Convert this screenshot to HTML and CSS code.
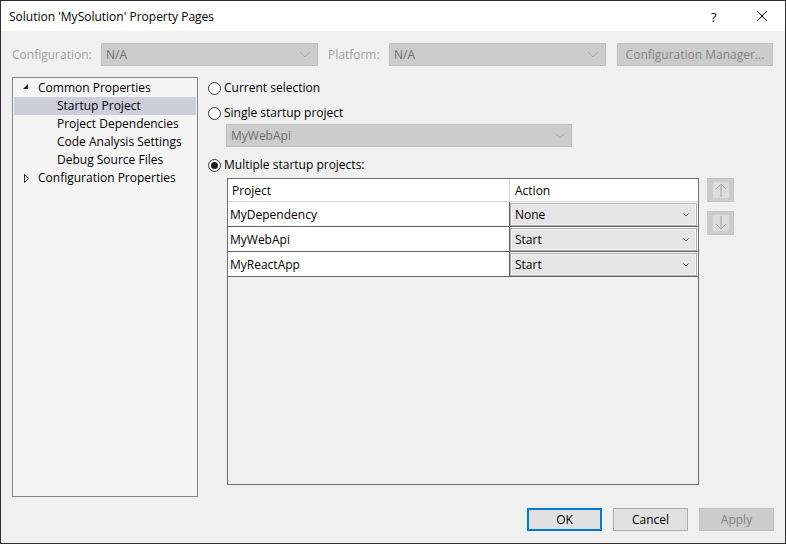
FILE: index.html
```html
<!DOCTYPE html>
<html>
<head>
<meta charset="utf-8">
<link rel="stylesheet" href="styles.css">
</head>
<body>
<div class="window">
  <div class="titlebar">
    <span class="title">Solution 'MySolution' Property Pages</span>
    <span class="help">?</span>
    <span class="close"><svg width="12" height="12" viewBox="0 0 12 12"><path d="M1 1 L11 11 M11 1 L1 11" stroke="#000" stroke-width="1" fill="none"/></svg></span>
  </div>
  <div class="body">
    <div class="configrow">
      <span class="lbl lbl-config">Configuration:</span>
      <div class="combo disabled combo-top"><span>N/A</span><svg class="chev-big" width="10" height="6" viewBox="0 0 10 6"><polyline points="0.5,0.5 5,5 9.5,0.5" fill="none" stroke="#a9a9a9" stroke-width="1"/></svg></div>
      <span class="lbl lbl-platform">Platform:</span>
      <div class="combo disabled combo-top"><span>N/A</span><svg class="chev-big" width="10" height="6" viewBox="0 0 10 6"><polyline points="0.5,0.5 5,5 9.5,0.5" fill="none" stroke="#a9a9a9" stroke-width="1"/></svg></div>
      <div class="btn btn-disabled cfgmgr">Configuration Manager...</div>
    </div>
    <div class="main">
      <div class="tree">
        <div class="node">
          <svg class="exp" width="9" height="9" viewBox="0 0 9 9"><polygon points="6,1 6,6 1,6" fill="#1e1e1e"/></svg>
          <span>Common Properties</span>
        </div>
        <div class="node child selected"><span>Startup Project</span></div>
        <div class="node child"><span>Project Dependencies</span></div>
        <div class="node child"><span>Code Analysis Settings</span></div>
        <div class="node child"><span>Debug Source Files</span></div>
        <div class="node">
          <svg class="exp" width="9" height="11" viewBox="0 0 9 11"><polygon points="2.5,1.5 6.5,5.5 2.5,9.5" fill="none" stroke="#1e1e1e" stroke-width="1"/></svg>
          <span>Configuration Properties</span>
        </div>
      </div>
      <div class="panel">
        <div class="radio-row r1"><span class="radio"></span><span>Current selection</span></div>
        <div class="radio-row r2"><span class="radio"></span><span>Single startup project</span></div>
        <div class="combo disabled combo-single"><span>MyWebApi</span><svg class="chev-big" width="10" height="6" viewBox="0 0 10 6"><polyline points="0.5,0.5 5,5 9.5,0.5" fill="none" stroke="#a9a9a9" stroke-width="1"/></svg></div>
        <div class="radio-row r3"><span class="radio checked"></span><span>Multiple startup projects:</span></div>
        <div class="gridrow">
          <div class="grid">
            <div class="ghead">
              <div class="gcell-p">Project</div>
              <div class="gcell-a">Action</div>
            </div>
            <div class="grow">
              <div class="gcell-p">MyDependency</div>
              <div class="gcell-a"><div class="cellcombo"><span>None</span><svg width="6" height="4" viewBox="0 0 6 4"><polyline points="0.5,0.5 3,3 5.5,0.5" fill="none" stroke="#555" stroke-width="1"/></svg></div></div>
            </div>
            <div class="grow">
              <div class="gcell-p">MyWebApi</div>
              <div class="gcell-a"><div class="cellcombo"><span>Start</span><svg width="6" height="4" viewBox="0 0 6 4"><polyline points="0.5,0.5 3,3 5.5,0.5" fill="none" stroke="#555" stroke-width="1"/></svg></div></div>
            </div>
            <div class="grow">
              <div class="gcell-p">MyReactApp</div>
              <div class="gcell-a"><div class="cellcombo"><span>Start</span><svg width="6" height="4" viewBox="0 0 6 4"><polyline points="0.5,0.5 3,3 5.5,0.5" fill="none" stroke="#555" stroke-width="1"/></svg></div></div>
            </div>
          </div>
          <div class="arrows">
            <div class="arrowbtn"><div class="arrowimg"><svg width="16" height="16" viewBox="0 0 16 16"><path d="M8 2 V15 M3 7 L8 2 L13 7" fill="none" stroke="#a6a6a6" stroke-width="1"/></svg></div></div>
            <div class="arrowbtn"><div class="arrowimg"><svg width="16" height="16" viewBox="0 0 16 16"><path d="M8 1 V14 M3 9 L8 14 L13 9" fill="none" stroke="#a6a6a6" stroke-width="1"/></svg></div></div>
          </div>
        </div>
      </div>
    </div>
    <div class="footer">
      <div class="btn btn-default">OK</div>
      <div class="btn">Cancel</div>
      <div class="btn btn-disabled">Apply</div>
    </div>
  </div>
</div>
</body>
</html>
```
FILE: styles.css
```css
* { box-sizing: border-box; }
html, body { margin: 0; padding: 0; }
body {
  font-family: "Open Sans", "Noto Sans", sans-serif;
  font-size: 12px;
  color: #000;
  background: #f0f0f0;
}
.window {
  width: 786px;
  height: 544px;
  border: 1px solid #2e2e2e;
  background: #f0f0f0;
  display: flex;
  flex-direction: column;
}
.titlebar {
  height: 30px;
  background: #fff;
  display: flex;
  align-items: center;
  padding-left: 8px;
  flex: none;
}
.title { flex: 1; line-height: 16px; padding-top: 1px; }
.help { font-size: 13px; width: 12px; margin-right: 33px; line-height: 16px; padding-top: 1px; }
.close { width: 12px; height: 12px; margin-right: 17px; display: flex; }
.body {
  flex: 1;
  display: flex;
  flex-direction: column;
  padding: 12px 12px 12px 11px;
}
.configrow {
  height: 23px;
  display: flex;
  align-items: stretch;
  flex: none;
}
.lbl { color: #a0a0a0; display: flex; align-items: center; }
.lbl-config { width: 89px; }
.lbl-platform { width: 61px; margin-left: 10px; }
.combo {
  display: flex;
  align-items: center;
  justify-content: space-between;
  border: 1px solid #bfbfbf;
  padding: 0 7px 0 4px;
}
.combo.disabled { background: #cccccc; color: #6d6d6d; }
.combo-top { width: 217px; }
.cfgmgr { width: 156px; margin-left: 11px; }
.chev-big { display: block; }
.btn {
  display: flex;
  align-items: center;
  justify-content: center;
  background: #e1e1e1;
  border: 1px solid #adadad;
  width: 75px;
  height: 23px;
}
.btn-disabled { background: #cccccc; border-color: #bfbfbf; color: #838383; }
.btn-default { border: 2px solid #0078d7; }
.cfgmgr.btn { width: 156px; height: 23px; }
.main {
  height: 420px;
  margin-top: 11px;
  display: flex;
  flex: none;
}
.tree {
  width: 186px;
  border: 1px solid #828790;
  background: #f5f5f5;
  padding: 1px;
}
.node {
  height: 18px;
  display: flex;
  align-items: center;
  padding-left: 24px;
  line-height: 18px;
  position: relative;
}
.node .exp { position: absolute; left: 8px; top: 4px; }
.node span { white-space: nowrap; }
.node.child { padding-left: 43px; }
.node.selected { background: #cccedb; }
.panel {
  margin-left: 9px;
  flex: 1;
  display: flex;
  flex-direction: column;
  padding-top: 2px;
}
.radio-row {
  height: 18px;
  display: flex;
  align-items: center;
  line-height: 18px;
}
.r2 { margin-top: 7px; }
.r3 { margin-top: 9px; }
.radio {
  width: 13px;
  height: 13px;
  border: 1px solid #333;
  border-radius: 50%;
  background: #fff;
  margin-left: 1px;
  margin-right: 3px;
  position: relative;
  flex: none;
}
.radio.checked::after {
  content: "";
  position: absolute;
  left: 2px; top: 2px;
  width: 7px; height: 7px;
  border-radius: 50%;
  background: #1a1a1a;
}
.combo-single {
  margin-left: 19px;
  margin-top: 2px;
  width: 346px;
  height: 23px;
  padding-right: 6px;
}
.gridrow {
  display: flex;
  margin-top: 4px;
  margin-left: 20px;
  align-items: flex-start;
}
.grid {
  width: 472px;
  height: 307px;
  border: 1px solid #6e6e6e;
  background: #f0f0f0;
}
.ghead {
  display: flex;
  height: 23px;
  background: #fff;
  border-bottom: 1px solid #d5d5d5;
}
.ghead .gcell-p {
  width: 282px;
  border-right: 1px solid #d5d5d5;
  padding-left: 4px;
  display: flex;
  align-items: center;
}
.ghead .gcell-a {
  flex: 1;
  padding-left: 5px;
  display: flex;
  align-items: center;
}
.grow {
  display: flex;
  height: 25px;
  background: #fff;
  border-bottom: 1px solid #646464;
}
.grow .gcell-p {
  width: 282px;
  border-right: 1px solid #646464;
  padding-left: 2px;
  display: flex;
  align-items: center;
}
.grow .gcell-a {
  flex: 1;
  padding: 1px 1px 0 0;
}
.cellcombo {
  height: 23px;
  border: 1px solid #adadad;
  box-shadow: inset 0 0 0 1px #f4f4f4;
  background: #e5e5e5;
  display: flex;
  align-items: center;
  justify-content: space-between;
  padding: 0 7px 0 4px;
}
.cellcombo svg { display: block; }
.arrows {
  margin-left: 8px;
  display: flex;
  flex-direction: column;
  gap: 9px;
}
.arrowbtn {
  width: 27px;
  height: 24px;
  background: #cccccc;
  border: 1px solid #c4c4c4;
  display: flex;
  align-items: center;
  justify-content: center;
}
.arrowimg {
  width: 16px;
  height: 16px;
  background: #dcdcdc;
}
.arrowimg svg { display: block; }
.footer {
  margin-top: 11px;
  margin-right: -1px;
  height: 23px;
  display: flex;
  justify-content: flex-end;
  gap: 11px;
  flex: none;
}
```
